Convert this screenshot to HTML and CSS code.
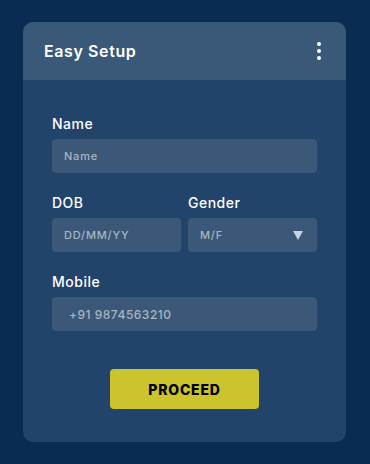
FILE: index.html
```html
<!DOCTYPE html>
<html>
<head>
  <title>Easy Setup</title>
  <link rel="stylesheet" href="styles.css">
</head>
<body>
  <div class="card">
    <div class="card-header">
      <h1>Easy Setup</h1>
      <div class="menu">
        <span></span><span></span><span></span>
      </div>
    </div>
    <form class="card-body">
      <div class="field">
        <label>Name</label>
        <div class="input">Name</div>
      </div>
      <div class="row">
        <div class="field">
          <label>DOB</label>
          <div class="input">DD/MM/YY</div>
        </div>
        <div class="field">
          <label>Gender</label>
          <div class="input select">M/F <span class="arrow"></span></div>
        </div>
      </div>
      <div class="field">
        <label>Mobile</label>
        <div class="input mobile">+91 9874563210</div>
      </div>
      <button type="button" class="proceed">PROCEED</button>
    </form>
  </div>
</body>
</html>
```

FILE: styles.css
```css
body {
  margin: 0;
  background-color: #0a2b52;
  font-family: Inter, "Open Sans", sans-serif;
  color: #ffffff;
}

.card {
  width: 323px;
  margin: 22px 0 0 23px;
  background-color: #22436a;
  border-radius: 10px;
  overflow: hidden;
  padding-bottom: 33px;
}

.card-header {
  height: 58px;
  background-color: #3a5877;
  display: flex;
  align-items: center;
  justify-content: space-between;
  padding: 0 21px;
}

.card-header h1 {
  margin: 0;
  font-size: 16px;
  font-weight: 600;
  letter-spacing: 0.6px;
}

.menu {
  display: flex;
  flex-direction: column;
  gap: 3px;
  padding-right: 4px;
}

.menu span {
  width: 4px;
  height: 4px;
  border-radius: 50%;
  background-color: #ffffff;
}

.card-body {
  padding: 35px 29px 0 29px;
  display: flex;
  flex-direction: column;
}

.field {
  display: flex;
  flex-direction: column;
  margin-bottom: 21px;
}

.field label {
  font-size: 14px;
  font-weight: 500;
  line-height: 17px;
  margin-bottom: 7px;
  letter-spacing: 0.5px;
}

.input {
  height: 34px;
  background-color: #3b5878;
  border-radius: 4px;
  display: flex;
  align-items: center;
  padding: 0 12px;
  font-size: 11px;
  font-weight: 500;
  color: #a9b5c2;
  letter-spacing: 0.8px;
}

.row {
  display: flex;
  gap: 7px;
}

.row .field {
  flex: 1;
}

.select {
  justify-content: space-between;
  padding-right: 14px;
}

.arrow {
  width: 0;
  height: 0;
  border-left: 5px solid transparent;
  border-right: 5px solid transparent;
  border-top: 9px solid #c9d1da;
}

.mobile {
  padding-left: 17px;
  font-size: 12px;
  letter-spacing: 0.5px;
}

.proceed {
  align-self: center;
  margin-top: 17px;
  width: 149px;
  height: 40px;
  background-color: #cbc42e;
  border: none;
  border-radius: 4px;
  font-family: Inter, sans-serif;
  font-size: 14px;
  font-weight: 800;
  letter-spacing: 0.8px;
  color: #000000;
}
```
